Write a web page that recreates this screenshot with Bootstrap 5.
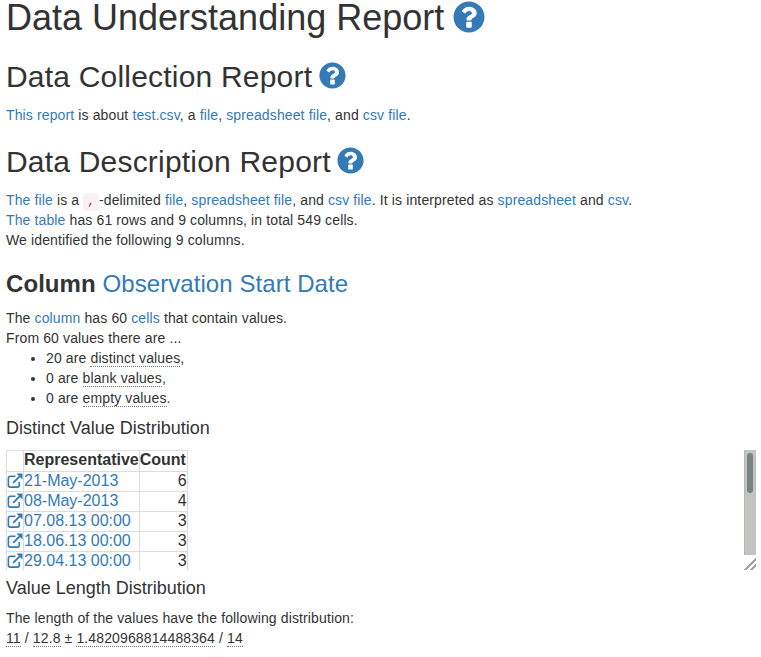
<!DOCTYPE html>
<html lang="en">
<head>
    <meta charset="UTF-8">
    <meta name="viewport" content="width=device-width, initial-scale=1.0">
    <title>Data Understanding Report</title>
    <link href="https://cdn.jsdelivr.net/npm/bootstrap@5.3.2/dist/css/bootstrap.min.css" rel="stylesheet">
    <style>
        body {
            font-family: "Liberation Sans", Arial, sans-serif;
            font-size: 14px;
            line-height: 20px;
            letter-spacing: .125px;
            color: #333;
            overflow: hidden;
        }
        a { color: #337ab7; text-decoration: none; }
        .report-page { padding: 0 5px 0 6px; }
        h1, h2, h3, h4 { font-weight: 500; line-height: 1.1; color: #333; margin: 0; letter-spacing: 0; }
        h1 { font-size: 36px; line-height: 40px; margin-top: -2px; margin-bottom: 22px; }
        h2 { font-size: 30px; margin-top: 20px; margin-bottom: 12px; letter-spacing: .2px; }
        h3 { font-size: 24px; margin-top: 21px; margin-bottom: 11px; letter-spacing: .07px; }
        h4 { font-size: 18px; margin-top: 11px; margin-bottom: 11px; }
        .values-box + h4 { margin-top: 9px; margin-bottom: 9px; }
        h3 b { font-weight: 700; }
        p { margin: 0 0 10px; }
        code { font-size: 12.6px; line-height: 1; padding: 2px 4px; color: #c7254e; background: #f9f2f4; border-radius: 4px; font-family: "Liberation Mono", monospace; }
        ul { margin: 0 0 10px; padding-left: 40px; }
        abbr[title] { text-decoration: none; border-bottom: 1px dotted #777; cursor: help; }
        .help-ico { display: inline-block; fill: #337ab7; }
        .h1-ico { width: 32px; height: 32px; margin-left: -1px; vertical-align: -3px; }
        .h2-ico { width: 27px; height: 27px; margin-left: -2px; vertical-align: -2px; }
        .values-box { position: relative; height: 120px; overflow: hidden; }
        .fake-scroll { position: absolute; top: 0; right: 0; width: 12px; height: 105px; background: #c1c4c1; border-left: 1px solid #b4b8b4; }
        .fake-thumb { position: absolute; top: 3px; left: 2px; width: 6px; height: 40px; background: #7a8383; border-radius: 3px; }
        .fake-grip { position: absolute; right: 0; bottom: 0; width: 15px; height: 15px; clip-path: polygon(100% 0, 100% 100%, 0 100%); background: repeating-linear-gradient(135deg, #a0a3a0 0 1.7px, #fff 1.7px 4.2px); }
        .dist-table { border-collapse: collapse; font-size: 16px; line-height: 18px; letter-spacing: 0; }
        .dist-table th, .dist-table td { border: 1px solid #ddd; padding: 0 0 1px; }
        .dist-table th { line-height: 17px; padding-bottom: 3px; }
        .dist-table th:last-child { width: 48px; }
        .dist-table td:first-child { width: 16px; }
        .dist-table td:last-child { text-align: right; }
        .ext-ico { display: block; width: 16px; height: 17px; stroke: #337ab7; fill: none; }
    </style>
</head>
<body>
<div class="report-page">
    <h1>Data Understanding Report <svg class="help-ico h1-ico" viewBox="0 0 512 512"><path d="M504 256c0 137-111 248-248 248S8 393 8 256C8 119 119 8 256 8s248 111 248 248zM262.700 90c-54.500 0-89.300 23-116.500 63.800-3.500 5.300-2.400 12.400 2.700 16.200l34.700 26.300c5.200 3.900 12.600 3 16.700-2.100 17.900-22.700 30.100-35.800 57.300-35.800 20.400 0 45.700 13.100 45.700 33 0 15-12.400 22.700-32.500 34C247.100 238.500 216 255 216 296v4c0 6.600 5.400 12 12 12h56c6.600 0 12-5.400 12-12v-1.300c0-28.500 83.200-29.700 83.200-106.700 0-58-60.200-102-116.500-102zM212 344v72c0 6.600 5.400 12 12 12h64c6.600 0 12-5.400 12-12v-72c0-6.600-5.400-12-12-12h-64c-6.600 0-12 5.400-12 12z"/></svg></h1>
    <h2>Data Collection Report <svg class="help-ico h2-ico" viewBox="0 0 512 512"><path d="M504 256c0 137-111 248-248 248S8 393 8 256C8 119 119 8 256 8s248 111 248 248zM262.700 90c-54.500 0-89.300 23-116.500 63.800-3.500 5.300-2.400 12.400 2.700 16.200l34.700 26.300c5.200 3.900 12.600 3 16.700-2.100 17.900-22.700 30.100-35.800 57.300-35.800 20.400 0 45.700 13.100 45.700 33 0 15-12.400 22.700-32.500 34C247.100 238.500 216 255 216 296v4c0 6.600 5.400 12 12 12h56c6.600 0 12-5.400 12-12v-1.300c0-28.500 83.200-29.700 83.200-106.700 0-58-60.200-102-116.500-102zM212 344v72c0 6.600 5.400 12 12 12h64c6.600 0 12-5.400 12-12v-72c0-6.600-5.400-12-12-12h-64c-6.600 0-12 5.400-12 12z"/></svg></h2>
    <p><a href="#">This report</a> is about <a href="#">test.csv</a>, a <a href="#">file</a>, <a href="#">spreadsheet file</a>, and <a href="#">csv file</a>.</p>
    <h2>Data Description Report <svg class="help-ico h2-ico" viewBox="0 0 512 512"><path d="M504 256c0 137-111 248-248 248S8 393 8 256C8 119 119 8 256 8s248 111 248 248zM262.700 90c-54.500 0-89.300 23-116.500 63.800-3.500 5.300-2.400 12.400 2.700 16.200l34.700 26.300c5.200 3.900 12.600 3 16.700-2.100 17.900-22.700 30.100-35.800 57.300-35.800 20.400 0 45.700 13.100 45.700 33 0 15-12.400 22.700-32.500 34C247.100 238.500 216 255 216 296v4c0 6.600 5.400 12 12 12h56c6.600 0 12-5.400 12-12v-1.300c0-28.500 83.200-29.700 83.200-106.700 0-58-60.200-102-116.500-102zM212 344v72c0 6.600 5.400 12 12 12h64c6.600 0 12-5.400 12-12v-72c0-6.600-5.400-12-12-12h-64c-6.600 0-12 5.400-12 12z"/></svg></h2>
    <p><a href="#">The file</a> is a <code>,</code>-delimited <a href="#">file</a>, <a href="#">spreadsheet file</a>, and <a href="#">csv file</a>. It is interpreted as <a href="#">spreadsheet</a> and <a href="#">csv</a>.<br>
    <a href="#">The table</a> has 61 rows and 9 columns, in total 549 cells.<br>
    We identified the following 9 columns.</p>
    <h3><b>Column</b> <a href="#">Observation Start Date</a></h3>
    <div>The <a href="#">column</a> has 60 <a href="#">cells</a> that contain values.<br>From 60 values there are ...</div>
    <ul>
        <li>20 are <abbr title="distinct">distinct values</abbr>,</li>
        <li>0 are <abbr title="blank">blank values</abbr>,</li>
        <li>0 are <abbr title="empty">empty values</abbr>.</li>
    </ul>
    <h4>Distinct Value Distribution</h4>
    <div class="values-box">
        <table class="dist-table">
            <thead><tr><th></th><th>Representative</th><th>Count</th></tr></thead>
            <tbody id="dist-rows"></tbody>
        </table>
        <div class="fake-scroll"><div class="fake-thumb"></div></div>
        <div class="fake-grip"></div>
    </div>
    <h4>Value Length Distribution</h4>
    <div>The length of the values have the following distribution:<br>
    <abbr title="min">11</abbr> / <abbr title="mean">12.8</abbr> ± <abbr title="stddev">1.4820968814488364</abbr> / <abbr title="max">14</abbr></div>
</div>

<script src="https://cdn.jsdelivr.net/npm/bootstrap@5.3.2/dist/js/bootstrap.bundle.min.js"></script>
<script>
    const rows = [['21-May-2013', 6], ['08-May-2013', 4], ['07.08.13 00:00', 3], ['18.06.13 00:00', 3], ['29.04.13 00:00', 3]];
    const ico = '<svg class="ext-ico" viewBox="0 1 17 17"><path stroke-width="1.7" d="M9 4H3.500A2 2 0 0 0 1.500 6v7.500a2 2 0 0 0 2 2H11a2 2 0 0 0 2-2V10"/><path stroke-width="2" d="M6.500 11L14 3.500"/><path stroke="none" fill="#337ab7" d="M10 1h6.500v6.500z"/></svg>';
    document.getElementById('dist-rows').innerHTML = rows.map(r =>
        `<tr><td>${ico}</td><td><a href="#">${r[0]}</a></td><td>${r[1]}</td></tr>`).join('');
</script>
</body>
</html>
